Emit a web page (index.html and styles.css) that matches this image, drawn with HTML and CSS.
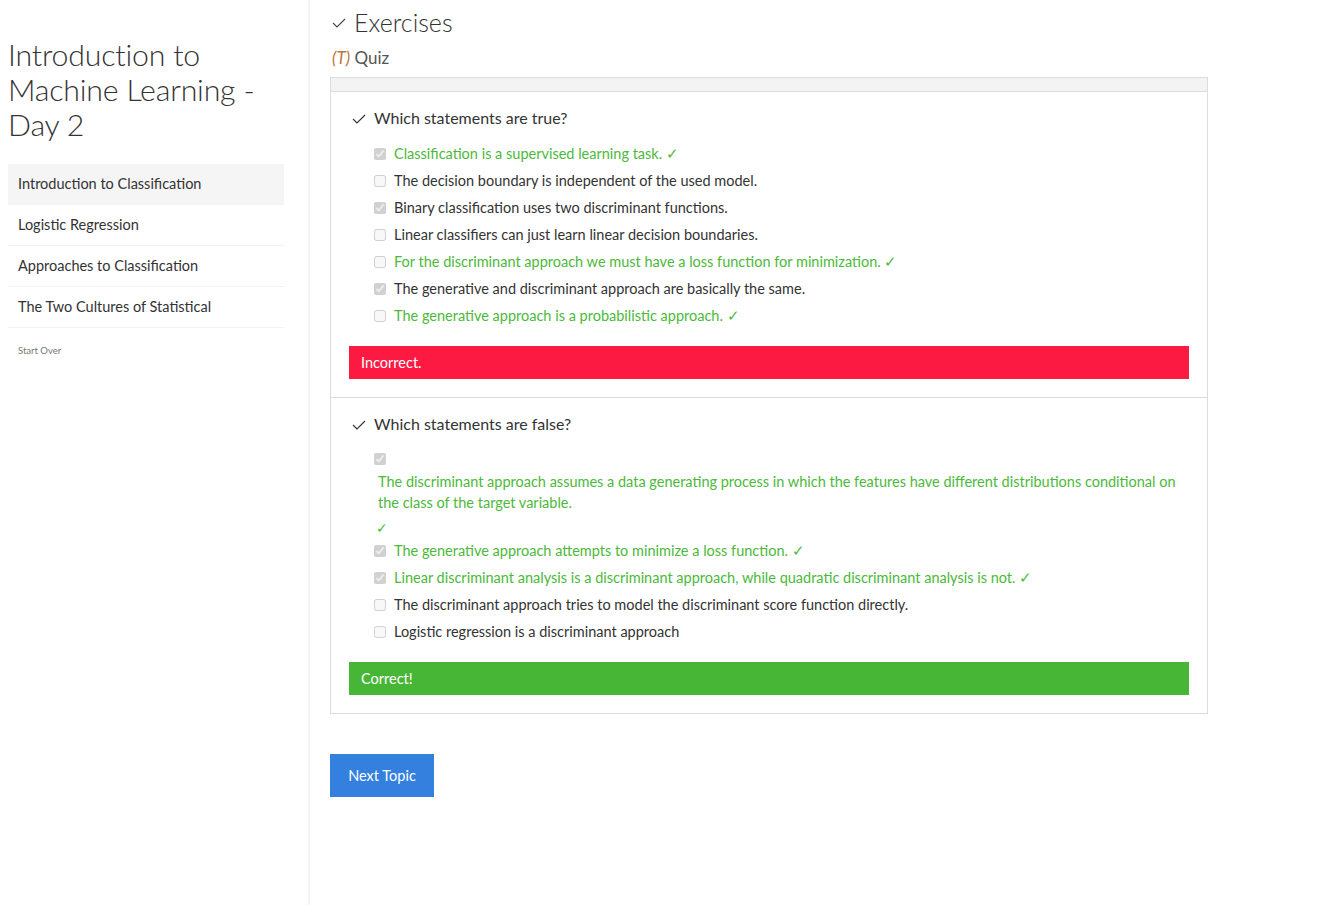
FILE: index.html
```html
<!DOCTYPE html>
<html lang="en">
<head>
<meta charset="utf-8">
<title>Introduction to Machine Learning - Day 2</title>
<link rel="stylesheet" href="styles.css">
</head>
<body>
<div class="page">
  <aside class="sidebar">
    <h1 class="title">Introduction to Machine Learning - Day 2</h1>
    <nav class="toc">
      <div class="toc-item active">Introduction to Classification</div>
      <div class="toc-item">Logistic Regression</div>
      <div class="toc-item">Approaches to Classification</div>
      <div class="toc-item">The Two Cultures of Statistical</div>
    </nav>
    <div class="start-over">Start Over</div>
  </aside>
  <main class="main">
    <h2 class="section-title"><svg class="chk-lg" viewBox="0 0 14 10" width="14" height="10"><polyline points="1,5 5,9 13,1" fill="none" stroke="#444" stroke-width="1.1"/></svg>Exercises</h2>
    <h3 class="quiz-title"><span class="tag">(T)</span> Quiz</h3>
    <div class="panel">
      <div class="panel-heading"></div>
      <section class="question">
        <div class="q-head"><svg class="chk" viewBox="0 0 14 10" width="14" height="10"><polyline points="1,5 5,9 13,1" fill="none" stroke="#333" stroke-width="1.1"/></svg>Which statements are true?</div>
        <div class="opts">
          <label class="opt good"><input type="checkbox" checked disabled><span>Classification is a supervised learning task. ✓</span></label>
          <label class="opt"><input type="checkbox" disabled><span>The decision boundary is independent of the used model.</span></label>
          <label class="opt"><input type="checkbox" checked disabled><span>Binary classification uses two discriminant functions.</span></label>
          <label class="opt"><input type="checkbox" disabled><span>Linear classifiers can just learn linear decision boundaries.</span></label>
          <label class="opt good"><input type="checkbox" disabled><span>For the discriminant approach we must have a loss function for minimization. ✓</span></label>
          <label class="opt"><input type="checkbox" checked disabled><span>The generative and discriminant approach are basically the same.</span></label>
          <label class="opt good"><input type="checkbox" disabled><span>The generative approach is a probabilistic approach. ✓</span></label>
        </div>
        <div class="alert alert-bad">Incorrect.</div>
      </section>
      <section class="question">
        <div class="q-head"><svg class="chk" viewBox="0 0 14 10" width="14" height="10"><polyline points="1,5 5,9 13,1" fill="none" stroke="#333" stroke-width="1.1"/></svg>Which statements are false?</div>
        <div class="opts">
          <div class="opt-long good">
            <label class="opt"><input type="checkbox" checked disabled></label>
            <p class="long-text">The discriminant approach assumes a data generating process in which the features have different distributions conditional on the class of the target variable.</p>
            <div class="long-mark">✓</div>
          </div>
          <label class="opt good"><input type="checkbox" checked disabled><span>The generative approach attempts to minimize a loss function. ✓</span></label>
          <label class="opt good"><input type="checkbox" checked disabled><span>Linear discriminant analysis is a discriminant approach, while quadratic discriminant analysis is not. ✓</span></label>
          <label class="opt"><input type="checkbox" disabled><span>The discriminant approach tries to model the discriminant score function directly.</span></label>
          <label class="opt"><input type="checkbox" disabled><span>Logistic regression is a discriminant approach</span></label>
        </div>
        <div class="alert alert-good">Correct!</div>
      </section>
    </div>
    <button class="next-btn" type="button">Next Topic</button>
  </main>
</div>
</body>
</html>
```

FILE: styles.css
```css
html, body {
  margin: 0;
  padding: 0;
  background: #fff;
}
body {
  font-family: "Source Sans Pro", Lato, "Open Sans", sans-serif;
  color: #333;
  font-size: 15px;
}
.page {
  display: flex;
  min-height: 905px;
}
.sidebar {
  width: 276px;
  flex: 0 0 276px;
  padding: 0 24px 0 8px;
  border-right: 2px solid #f3f3f3;
}
.title {
  margin: 37px 0 22px 0;
  font-size: 30.3px;
  font-weight: 300;
  line-height: 35px;
  color: #333;
  letter-spacing: -0.2px;
}
.toc {
  display: flex;
  flex-direction: column;
}
.toc-item {
  height: 40px;
  line-height: 40px;
  padding-left: 10px;
  border-bottom: 1px solid #f2f2f2;
  font-size: 14.5px;
  color: #333;
  white-space: nowrap;
  overflow: hidden;
}
.toc-item.active {
  background: #f5f5f5;
}
.start-over {
  margin: 17px 0 0 10px;
  font-size: 9.5px;
  color: #777;
}
.main {
  flex: 1;
  padding-left: 20px;
}
.section-title {
  margin: 7px 0 0 0;
  display: flex;
  align-items: center;
  font-size: 25px;
  font-weight: 300;
  line-height: 30px;
  color: #333;
}
.chk-lg {
  margin: 2px 8px 0 2px;
}
.quiz-title {
  margin: 10px 0 0 2px;
  font-size: 17px;
  font-weight: 400;
  line-height: 22px;
  color: #555;
}
.tag {
  font-style: italic;
  color: #c0743a;
}
.panel {
  width: 876px;
  margin-top: 8px;
  border: 1px solid #dcdcdc;
}
.panel-heading {
  height: 13px;
  background: #f3f3f3;
  border-bottom: 1px solid #dcdcdc;
}
.question {
  padding: 15px 18px 18px 18px;
}
.question + .question {
  border-top: 1px solid #dcdcdc;
}
.q-head {
  display: flex;
  align-items: center;
  font-size: 16px;
  line-height: 22px;
  color: #333;
  padding-left: 3px;
}
.chk {
  margin: 2px 8px 0 0;
}
.opts {
  margin-top: 11px;
  padding-left: 25px;
}
.question + .question .opts {
  margin-top: 10px;
}
.opt {
  display: flex;
  align-items: center;
  height: 27px;
  font-size: 14.5px;
  color: #333;
}
.opt input {
  margin: 0 8px 0 0;
  width: 12px;
  height: 12px;
}
.good, .good .opt {
  color: #4cb93a;
}
.long-text {
  margin: -1px 0 0 4px;
  font-size: 14.5px;
  line-height: 21px;
}
.long-mark {
  margin: 4px 0 -1px 2px;
  font-size: 14px;
  line-height: 21px;
}
.alert {
  margin-top: 17px;
  height: 33px;
  line-height: 33px;
  padding-left: 12px;
  color: #fff;
  font-size: 14.5px;
}
.alert-bad {
  background: #fd1a42;
}
.alert-good {
  background: #47b535;
}
.next-btn {
  margin-top: 40px;
  width: 104px;
  height: 43px;
  border: none;
  background: #3380df;
  color: #fff;
  font-family: inherit;
  font-size: 14.5px;
  cursor: pointer;
}
```
